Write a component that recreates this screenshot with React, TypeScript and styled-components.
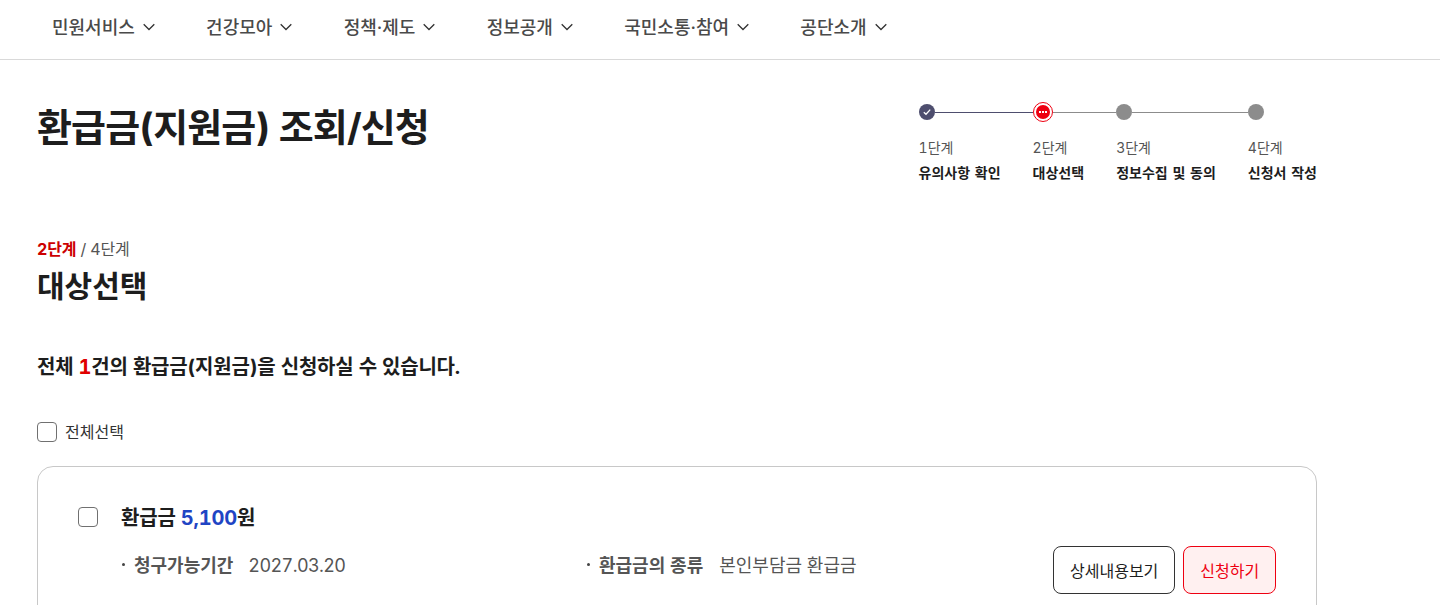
import React from "react";
import styled, { createGlobalStyle } from "styled-components";

const Global = createGlobalStyle`
  html, body { margin: 0; padding: 0; background: #fff; height: 605px; overflow: hidden; }
  * { box-sizing: border-box; }
  body {
    font-family: Inter, "Noto Sans CJK KR", sans-serif;
    font-variant-numeric: tabular-nums;
    color: #1d1d1d;
  }
`;

const Page = styled.div`
  width: 1440px;
  height: 605px;
  overflow: hidden;
`;
const Nav = styled.nav`
  height: 60px;
  border-bottom: 1px solid #d9d9d9;
  display: flex;
  align-items: center;
  padding: 0 0 8px 52px;
  gap: 51.3px;
`;
const NavItem = styled.div`
  display: flex;
  align-items: center;
  gap: 8px;
  font-size: 18px;
  font-weight: 500;
  color: #4a4a4a;
`;
const NavChevron = styled.svg`
  margin-top: 2px;
`;
const Main = styled.main`
  width: 1280px;
  margin-left: 37px;
`;
const Head = styled.div`
  display: flex;
  justify-content: space-between;
  align-items: flex-start;
  padding-top: 42px;
`;
const Title = styled.h1`
  margin: 0;
  font-size: 38px;
  line-height: 50px;
  font-weight: 700;
  letter-spacing: -0.88px;
  color: #1d1d1d;
`;
const Stepper = styled.ol`
  display: flex;
  margin: 0;
  padding: 0;
  list-style: none;
`;
const Step = styled.li`
  display: flex;
  flex-direction: column;
`;
const Track = styled.div`
  height: 20px;
  display: flex;
  align-items: center;
`;
const Line = styled.span<{ $color: string }>`
  flex: 1;
  height: 1px;
  background: ${(p) => p.$color};
`;
const Dot = styled.span<{ $kind: "done" | "now" | "next" }>`
  flex: none;
  display: flex;
  align-items: center;
  justify-content: center;
  border-radius: 50%;
  width: ${(p) => (p.$kind === "now" ? 20 : 16)}px;
  height: ${(p) => (p.$kind === "now" ? 20 : 16)}px;
  background: ${(p) => (p.$kind === "done" ? "#4e4e6e" : p.$kind === "now" ? "#ee0011" : "#8c8c8c")};
  ${(p) => p.$kind === "now" && "border: 1.5px solid #ee0011; padding: 2px; background-clip: content-box;"}
`;
const StepNum = styled.div`
  margin-top: 16px;
  font-size: 14px;
  line-height: 20px;
  color: #555;
`;
const StepName = styled.div<{ $last?: boolean }>`
  margin-top: 5px;
  margin-right: ${(p) => (p.$last ? 0 : 32)}px;
  font-size: 14px;
  line-height: 20px;
  font-weight: 700;
  color: #1d1d1d;
  white-space: nowrap;
  word-spacing: 1px;
`;
const Counter = styled.div`
  margin-top: 55px;
  font-size: 16px;
  line-height: 22px;
  color: #555;
  letter-spacing: -0.15px;
`;
const Red = styled.span`
  color: #cc0000;
  font-weight: 700;
`;
const SubTitle = styled.h2`
  margin: 5px 0 0;
  font-size: 30px;
  line-height: 42px;
  font-weight: 700;
`;
const Summary = styled.p`
  margin: 46px 0 0;
  font-size: 20px;
  line-height: 28px;
  font-weight: 700;
  letter-spacing: -0.2px;
`;
const Em = styled.span`
  color: #e00000;
`;
const CheckRow = styled.label`
  display: flex;
  align-items: center;
  gap: 8px;
  margin-top: 41px;
  font-size: 16px;
  line-height: 20px;
  color: #333;
`;
const Box = styled.span`
  width: 20px;
  height: 20px;
  flex: none;
  border: 1px solid #707070;
  border-radius: 4px;
  background: #fff;
`;
const Card = styled.section`
  margin-top: 24px;
  height: 300px;
  border: 1px solid #c8c8c8;
  border-radius: 16px;
  padding: 40px;
  display: grid;
  grid-template-columns: 20px 1fr;
  column-gap: 23px;
  align-content: start;
`;
const CardBody = styled.div`
  display: flex;
  flex-direction: column;
`;
const Amount = styled.div`
  font-size: 20px;
  line-height: 30px;
  margin-top: -4px;
  font-weight: 700;
  letter-spacing: -0.2px;
`;
const Money = styled.span`
  color: #1f45c4;
`;
const Row = styled.div`
  display: flex;
  align-items: flex-start;
  margin-top: 13px;
  justify-content: space-between;
`;
const Field = styled.div<{ $w: number }>`
  width: ${(p) => p.$w}px;
  display: flex;
  align-items: center;
  font-size: 18px;
  line-height: 40px;
  color: #555;
`;
const FieldName = styled.strong`
  font-weight: 700;
  margin-right: 16px;
  &::before {
    content: "";
    display: inline-block;
    width: 3px;
    height: 3px;
    border-radius: 50%;
    background: #444;
    margin: 0 9px 0 1px;
    vertical-align: 6px;
  }
`;
const DateValue = styled.span`
  margin-left: -1px;
  letter-spacing: -0.6px;
`;
const Buttons = styled.div`
  display: flex;
  gap: 8px;
`;
const Btn = styled.button<{ $red?: boolean }>`
  height: 48px;
  padding: 0 16px;
  border-radius: 8px;
  white-space: nowrap;
  font: 400 16px Inter, "Noto Sans CJK KR", sans-serif;
  border: 1px solid ${(p) => (p.$red ? "#ee0011" : "#333")};
  background: ${(p) => (p.$red ? "#fff0f0" : "#fff")};
  color: ${(p) => (p.$red ? "#ee0011" : "#1d1d1d")};
`;

const Chevron = () => (
  <NavChevron width="12" height="8" viewBox="0 0 12 8" fill="none" stroke="#333" strokeWidth="1.3">
    <path d="M.7 1.2 6 6.5l5.3-5.3" />
  </NavChevron>
);
const menus = ["민원서비스", "건강모아", "정책·제도", "정보공개", "국민소통·참여", "공단소개"];
const steps: { kind: "done" | "now" | "next"; name: string; line: string }[] = [
  { kind: "done", name: "유의사항 확인", line: "#4e4e6e" },
  { kind: "now", name: "대상선택", line: "#8c8c8c" },
  { kind: "next", name: "정보수집 및 동의", line: "#8c8c8c" },
  { kind: "next", name: "신청서 작성", line: "" },
];

export default function App() {
  return (
    <Page>
      <Global />
      <Nav>
        {menus.map((m) => (
          <NavItem key={m}>
            {m}
            <Chevron />
          </NavItem>
        ))}
      </Nav>
      <Main>
        <Head>
          <Title>환급금(지원금) 조회/신청</Title>
          <Stepper>
            {steps.map((s, i) => (
              <Step key={s.name}>
                <Track>
                  <Dot $kind={s.kind}>
                    {s.kind === "done" && (
                      <svg width="8" height="8" viewBox="0 0 8 8" fill="none" stroke="#fff" strokeWidth="1.3">
                        <path d="M.8 4.2 3 6.3 7.2 1.6" />
                      </svg>
                    )}
                    {s.kind === "now" && (
                      <svg width="8" height="2" viewBox="0 0 8 2" fill="#fff">
                        <rect x="0" width="2" height="2" />
                        <rect x="3" width="2" height="2" />
                        <rect x="6" width="2" height="2" />
                      </svg>
                    )}
                  </Dot>
                  {s.line && <Line $color={s.line} />}
                </Track>
                <StepNum>{i + 1}단계</StepNum>
                <StepName $last={i === 3}>{s.name}</StepName>
              </Step>
            ))}
          </Stepper>
        </Head>
        <Counter>
          <Red>2단계</Red> / 4단계
        </Counter>
        <SubTitle>대상선택</SubTitle>
        <Summary>
          전체 <Em>1</Em>건의 환급금(지원금)을 신청하실 수 있습니다.
        </Summary>
        <CheckRow>
          <Box />
          전체선택
        </CheckRow>
        <Card>
          <Box />
          <CardBody>
            <Amount>
              환급금 <Money>5,100</Money>원
            </Amount>
            <Row>
              <Field $w={465}>
                <FieldName>청구가능기간</FieldName>
                <DateValue>2027.03.20</DateValue>
              </Field>
              <Field $w={467}>
                <FieldName>환급금의 종류</FieldName>본인부담금 환급금
              </Field>
              <Buttons>
                <Btn>상세내용보기</Btn>
                <Btn $red>신청하기</Btn>
              </Buttons>
            </Row>
          </CardBody>
        </Card>
      </Main>
    </Page>
  );
}
